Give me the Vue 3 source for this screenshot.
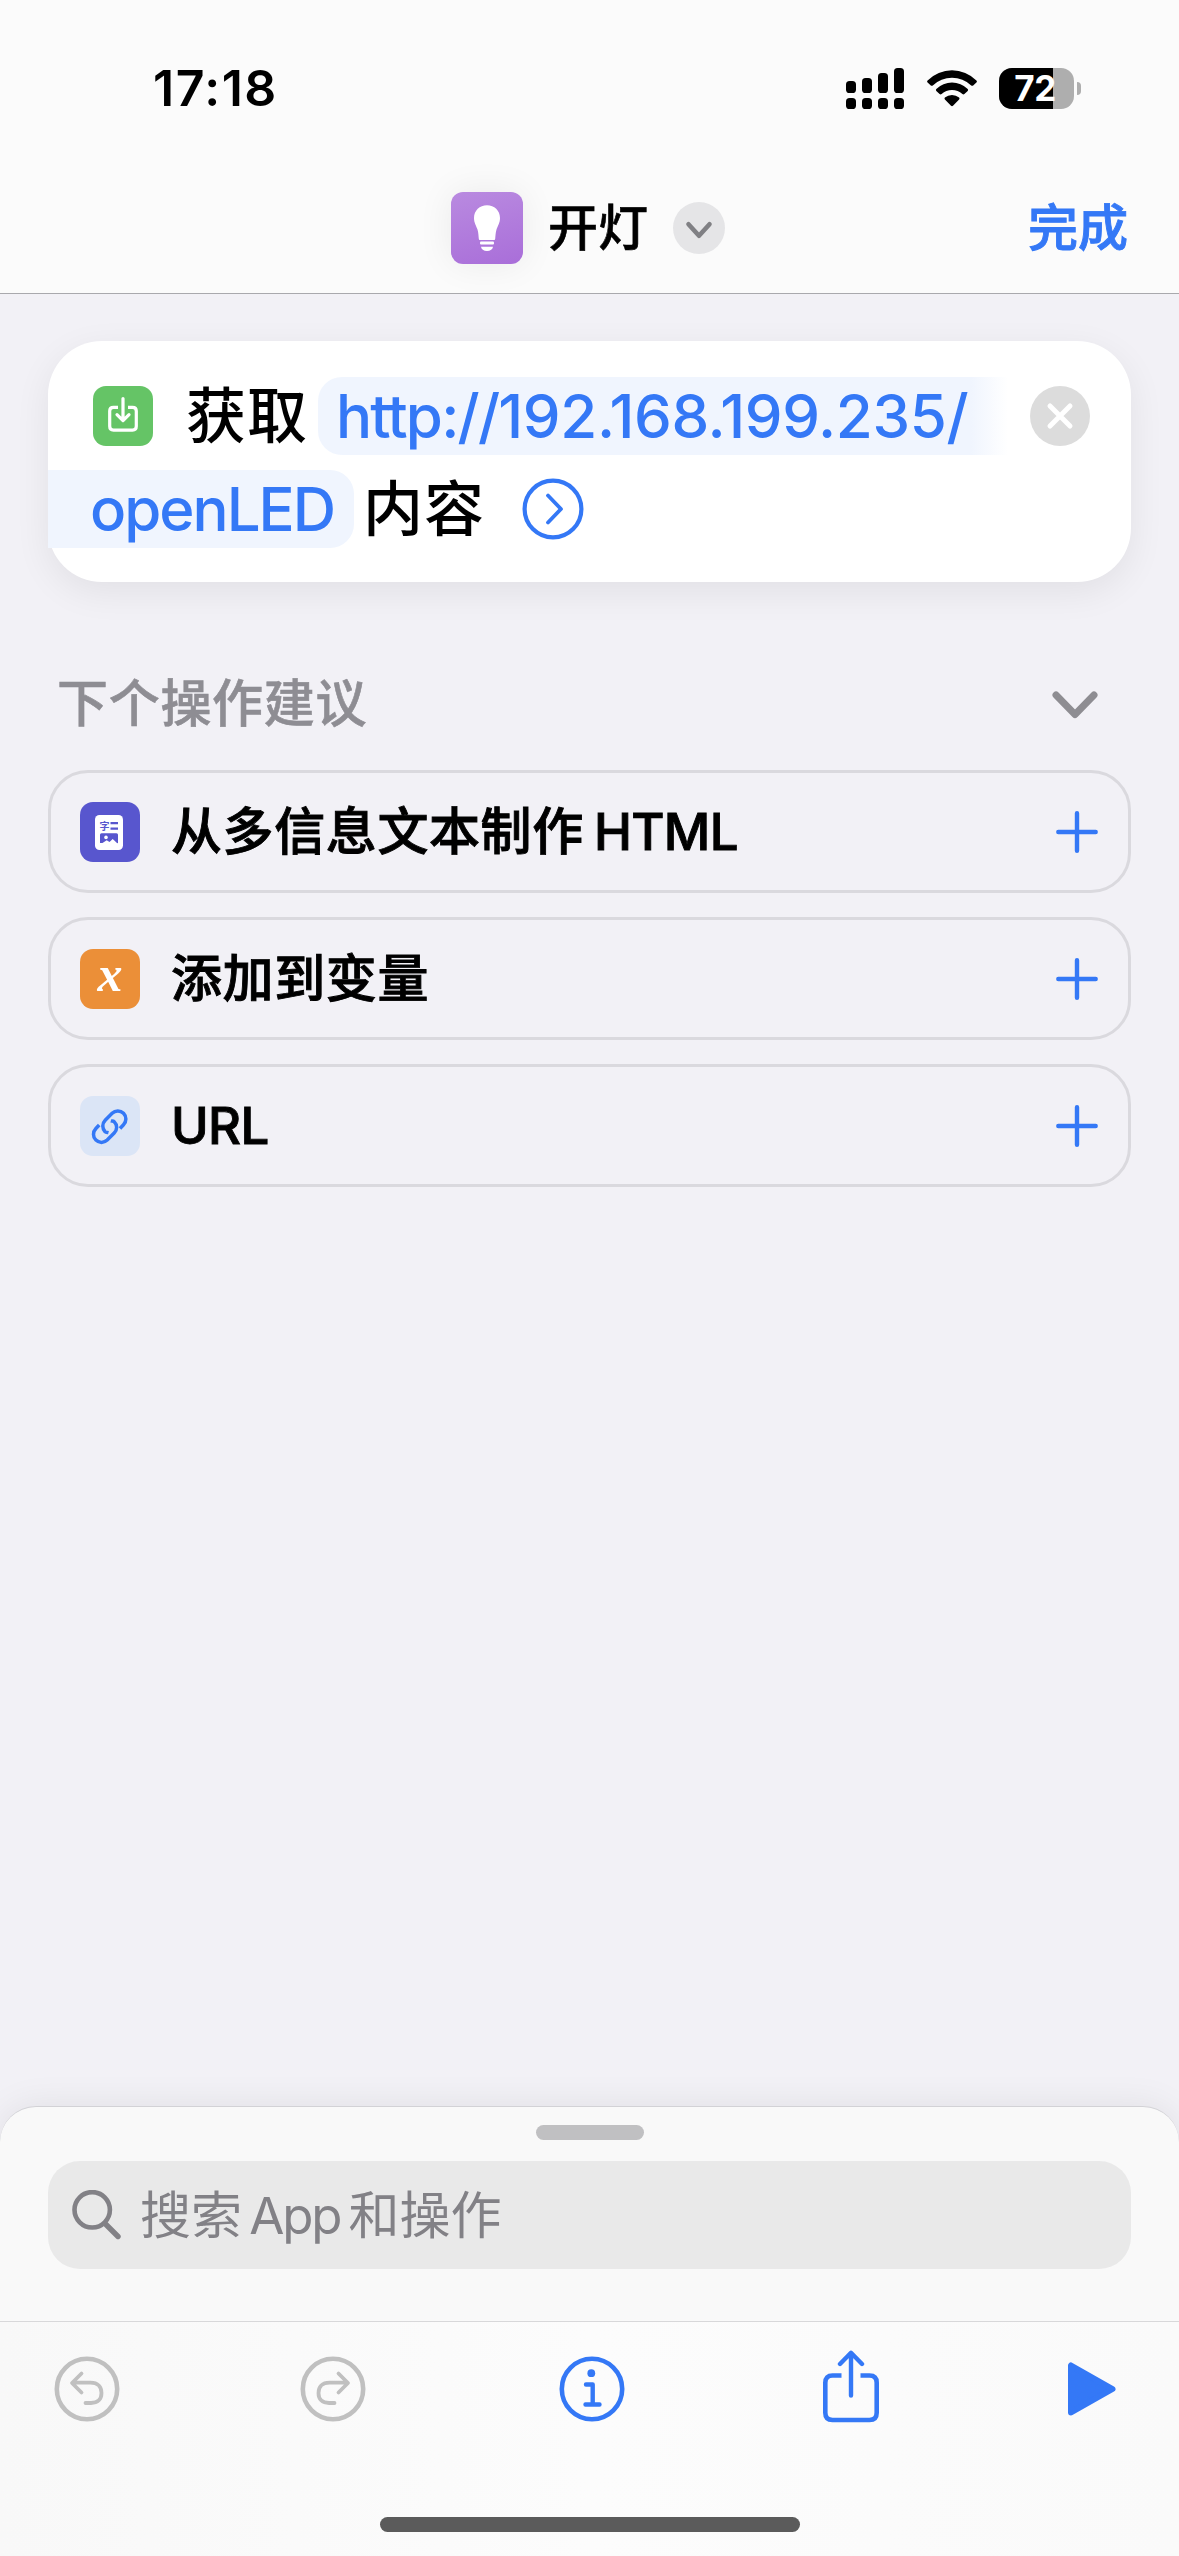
<template>
  <div class="shortcut-editor">
    <header class="top">
      <div class="status-bar">
        <span class="time">17:18</span>
        <div class="status-icons">
          <svg class="signal" width="58" height="41" viewBox="0 0 58 41">
            <rect
              v-for="(bar, i) in signalBars"
              :key="'bar' + i"
              :x="i * 16"
              :y="bar.y"
              width="10"
              :height="bar.h"
              rx="3.6"
            />
            <rect v-for="i in 4" :key="'dot' + i" :x="(i - 1) * 16" y="30" width="10" height="11" rx="3.6" />
          </svg>
          <svg class="wifi" width="50" height="38" viewBox="0 0 50 38">
            <path d="M0.6 11.4A34.5 34.5 0 0 1 49.4 11.4Q50.4 12.4 49.4 13.4L46.2 16.4Q45.2 17.2 44.2 16.4A28 28 0 0 0 5.8 16.4Q4.8 17.2 3.8 16.4L0.6 13.4Q-0.4 12.4 0.6 11.4Z" />
            <path d="M9.3 20A22.5 22.5 0 0 1 40.7 20Q41.6 21 40.7 22L37.4 25Q36.4 25.8 35.4 25A15.4 15.4 0 0 0 14.6 25Q13.6 25.8 12.6 25L9.3 22Q8.4 21 9.3 20Z" />
            <path d="M17.9 28.6A10.8 10.8 0 0 1 32.1 28.6Q33 29.6 32.1 30.5L26 36.8Q25 37.7 24 36.8L17.9 30.5Q17 29.6 17.9 28.6Z" />
          </svg>
          <div class="battery">
            <div class="battery-body">
              <div class="battery-level" :style="{ width: battery + '%' }"></div>
              <span class="battery-text">{{ battery }}</span>
            </div>
            <div class="battery-nub"></div>
          </div>
        </div>
      </div>

      <div class="nav">
        <div class="nav-title">
          <div class="app-icon">
            <svg width="72" height="72" viewBox="0 0 72 72" fill="#fff">
              <path d="M36 13.3c7.3 0 13 5.4 13 12.6 0 5-2.3 7.8-3.5 11.7-1 3.2-1 7-1.3 9.2-.1.9-.5 1.2-1.2 1.2H29c-.7 0-1.1-.3-1.2-1.2-.3-2.2-.3-6-1.3-9.2C25.3 33.7 23 30.9 23 25.9c0-7.2 5.7-12.6 13-12.6z" />
              <rect x="29" y="49.4" width="14" height="3.2" rx="1" />
              <path d="M30 54.8h12c-.3 2.6-2.6 4.2-6 4.2s-5.7-1.6-6-4.2z" />
            </svg>
          </div>
          <h1>开灯</h1>
          <button class="btn-more">
            <svg width="52" height="52" viewBox="0 0 52 52">
              <path d="M15.5 22.3L26 33.8L36.5 22.3" fill="none" stroke="#808084" stroke-width="4.6" stroke-linecap="round" stroke-linejoin="round" />
            </svg>
          </button>
        </div>
        <button class="btn-done">完成</button>
      </div>
    </header>

    <main class="content">
      <section class="action-card">
        <div class="line line-first">
          <div class="icon icon-green">
            <svg width="60" height="60" viewBox="0 0 60 60" fill="none" stroke="#fff" stroke-width="3.2" stroke-linecap="round" stroke-linejoin="round">
              <path d="M25 21.3H20.5Q16.7 21.3 16.7 25.1V40.3Q16.7 44.1 20.5 44.1H39.5Q43.3 44.1 43.3 40.3V25.1Q43.3 21.3 39.5 21.3H35" stroke-linecap="butt" />
              <path d="M30 12.5V34M24 28.6L30 34.6L36 28.6" />
            </svg>
          </div>
          <span class="word word-get">获取</span>
          <span class="token token-start"><span class="scheme">http://</span>192.168.199.235/</span>
          <button class="btn-remove">
            <svg width="60" height="60" viewBox="0 0 60 60">
              <path d="M20 20L40 40M40 20L20 40" stroke="#fff" stroke-width="5" stroke-linecap="round" />
            </svg>
          </button>
        </div>
        <div class="line">
          <span class="token token-end">openLED</span>
          <span class="word word-content">内容</span>
          <svg class="expand" width="62" height="62" viewBox="0 0 62 62" fill="none" stroke="#3478f6" stroke-linecap="round" stroke-linejoin="round">
            <circle cx="31" cy="31" r="28.4" stroke-width="4.2" />
            <path d="M26 17.5L39 31L26 44.5" stroke-width="3.8" />
          </svg>
        </div>
      </section>

      <section class="suggestions">
        <div class="section-header">
          <h2>下个操作建议</h2>
          <svg width="46" height="28" viewBox="0 0 46 28">
            <path d="M4 4L23 23.5L42 4" fill="none" stroke="#8e8d92" stroke-width="7" stroke-linecap="round" stroke-linejoin="round" />
          </svg>
        </div>

        <div v-for="item in suggestions" :key="item.id" class="suggestion">
          <div class="icon" :class="'icon-' + item.id">
            <svg v-if="item.id === 'html'" width="60" height="60" viewBox="0 0 60 60">
              <rect x="15" y="13" width="28" height="35" rx="4.5" fill="#fff" />
              <text class="glyph-zi" x="19.6" y="28">字</text>
              <path d="M30.5 21.2h7.5M30.5 26.7h7.5" stroke="#5856ce" stroke-width="2.2" />
              <path d="M21.5 31.2h15q1.500 0 1.500 1.500v8.600l-1-.300-4.300-4-3.200 3-2.800-1.700L22.500 41H20v-8.300q0-1.500 1.500-1.500z" fill="#5856ce" />
              <circle cx="26" cy="35.4" r="1.8" fill="#fff" />
            </svg>
            <span v-else-if="item.id === 'variable'" class="glyph-x">x</span>
            <svg v-else width="60" height="60" viewBox="0 0 60 60" fill="none" stroke="#3478f6" stroke-width="3.5">
              <path d="M19.2 29L15.9 32.5C12.7 35.8 12.7 41 15.9 44.1C19 47.2 24 47.2 27.2 44.1L34.2 37C37.5 33.7 37.4 28.8 34.2 25.7C33.3 24.9 32 25.2 30.8 24.9" />
              <path d="M40 32.5L43.5 28.7C46.7 25.4 46.6 20.5 43.5 17.3C40.4 14.2 35.3 14.2 32.1 17.3L25.2 24.3C22 27.6 22 32.5 25.1 35.7C26 36.5 27.3 36.3 28.5 36.6" />
            </svg>
          </div>
          <span class="suggestion-title">{{ item.title }} <span class="suggestion-latin">{{ item.latin }}</span></span>
          <svg width="42" height="42" viewBox="0 0 42 42">
            <path d="M21 2.3V39.7M2.3 21H39.7" stroke="#3478f6" stroke-width="4.4" stroke-linecap="round" />
          </svg>
        </div>
      </section>
    </main>

    <section class="sheet">
      <div class="grabber"></div>
      <div class="search">
        <svg width="50" height="50" viewBox="0 0 50 50" fill="none" stroke="#828186" stroke-linecap="round">
          <circle cx="20.2" cy="19.8" r="17.7" stroke-width="4.6" />
          <path d="M33 33.5L46 46.5" stroke-width="5.4" />
        </svg>
        <span class="placeholder">搜索 <span class="latin">App</span>和操作</span>
      </div>
    </section>

    <footer class="toolbar">
      <div class="tools">
        <svg class="tool disabled" width="66" height="66" viewBox="0 0 66 66">
          <circle cx="33" cy="33" r="30.2" stroke-width="4.6" />
          <path d="M27.5 17.5L18 27L27.5 36.5M19 26.7H36.5C44 26.7 47.5 31 47.5 37C47.5 43 44 47 37 47H31.5" stroke-width="3.8" />
        </svg>
        <svg class="tool tool-redo disabled" width="66" height="66" viewBox="0 0 66 66">
          <circle cx="33" cy="33" r="30.2" stroke-width="4.6" />
          <path d="M38.5 17.5L48 27L38.5 36.5M47 26.7H29.5C22 26.7 18.5 31 18.5 37C18.5 43 22 47 29 47H34.5" stroke-width="3.8" />
        </svg>
        <svg class="tool tool-info" width="66" height="66" viewBox="0 0 66 66">
          <circle cx="33" cy="33" r="30.2" stroke-width="4.6" />
          <path d="M27 28.5H33.7V48.5M26.5 48.5H40.5" stroke-width="4.4" />
          <circle cx="32.3" cy="17.2" r="3.9" fill="#3478f6" stroke="none" />
        </svg>
        <svg class="tool tool-share" width="58" height="74" viewBox="0 0 58 74">
          <path d="M19.5 25.5H10.5Q3.3 25.5 3.3 32.7V62.8Q3.3 70 10.5 70H47.5Q54.7 70 54.7 62.8V32.7Q54.7 25.5 47.5 25.5H38.5" stroke-width="4.6" stroke-linecap="butt" />
          <path d="M29 3.5V45.5M18 14L29 2.8L40 14" stroke-width="4.4" />
        </svg>
        <svg class="tool tool-play" width="50" height="56" viewBox="0 0 50 56">
          <path d="M4 4.5V51.5L45.5 28Z" fill="#3478f6" stroke-width="6" />
        </svg>
      </div>
      <div class="home-indicator"></div>
    </footer>
  </div>
</template>

<script setup>
import { ref } from 'vue'

const battery = ref(72)

const signalBars = [
  { y: 13, h: 12 },
  { y: 10, h: 15 },
  { y: 5, h: 20 },
  { y: 0, h: 25 }
]

const suggestions = ref([
  { id: 'html', title: '从多信息文本制作', latin: 'HTML' },
  { id: 'variable', title: '添加到变量', latin: '' },
  { id: 'url', title: '', latin: 'URL' }
])
</script>

<style>
body {
  margin: 0;
  background: #f2f1f6;
}
</style>

<style scoped>
.shortcut-editor {
  display: flex;
  flex-direction: column;
  width: 1179px;
  height: 2556px;
  overflow: hidden;
  background: #f2f1f6;
  color: #000;
  font-family: Inter, "Noto Sans CJK SC", sans-serif;
  font-size: 51px;
}

svg {
  display: block;
  flex: none;
}

button {
  border: none;
  padding: 0;
  margin: 0;
  background: none;
  font-family: inherit;
}

h1,
h2 {
  margin: 0;
}

.top {
  box-sizing: border-box;
  height: 294px;
  background: #fbfbfb;
  border-bottom: 1px solid #a9a9ad;
}

.status-bar {
  display: flex;
  justify-content: space-between;
  align-items: center;
  height: 176px;
  padding: 0 98px 0 153px;
}

.time {
  font-size: 50px;
  font-weight: 600;
  letter-spacing: 1.5px;
}

.status-icons {
  display: flex;
  align-items: center;
}

.wifi {
  margin: 0 22px 0 23px;
}

.battery {
  display: flex;
  align-items: center;
  gap: 3px;
}

.battery-body {
  position: relative;
  display: flex;
  align-items: center;
  justify-content: center;
  width: 75px;
  height: 41px;
  border-radius: 13px;
  background: #aeaeae;
  overflow: hidden;
}

.battery-level {
  position: absolute;
  left: 0;
  top: 0;
  bottom: 0;
  background: #000;
}

.battery-text {
  position: relative;
  color: #fff;
  margin-right: 3px;
  font-size: 35px;
  font-weight: 700;
  line-height: 41px;
  letter-spacing: -0.5px;
}

.battery-nub {
  width: 4px;
  height: 13px;
  border-radius: 0 6px 6px 0;
  background: #aeaeae;
}

.nav {
  display: flex;
  justify-content: space-between;
  align-items: center;
  height: 104px;
  padding: 0 51px 0 451px;
}

.nav-title {
  display: flex;
  align-items: center;
}

.app-icon {
  width: 72px;
  height: 72px;
  border-radius: 12px;
  background: linear-gradient(165deg, #b98ae0, #a96ed9);
  box-shadow: 0 0 36px rgba(0, 0, 0, 0.07);
}

h1 {
  margin: 0 25px 0 25px;
  font-size: 50px;
  font-weight: 500;
  line-height: 72px;
  -webkit-text-stroke: 0.6px currentColor;
}

.btn-more {
  width: 52px;
  height: 52px;
  border-radius: 50%;
  background: #e5e5e7;
}

.btn-done {
  color: #3478f6;
  font-size: 50px;
  font-weight: 500;
  line-height: 72px;
  -webkit-text-stroke: 0.9px currentColor;
}

.content {
  flex: 1;
  padding: 47px 48px 0;
}

.action-card {
  box-sizing: border-box;
  height: 241px;
  padding-top: 36px;
  border-radius: 54px;
  background: #fff;
  box-shadow: 0 10px 36px rgba(0, 0, 0, 0.07);
  font-size: 60px;
}

.line {
  display: flex;
  align-items: center;
  height: 78px;
  margin-bottom: 15px;
}

.line-first {
  padding: 0 41px 0 45px;
}

.icon {
  display: flex;
  align-items: center;
  justify-content: center;
  flex: none;
  width: 60px;
  height: 60px;
  border-radius: 13px;
}

.icon-green {
  background: #65c466;
}

.word {
  font-weight: 500;
  line-height: 78px;
  letter-spacing: 1px;
  white-space: nowrap;
}

.word-get {
  margin: 0 10px 0 33px;
}

.token {
  box-sizing: border-box;
  height: 78px;
  line-height: 78px;
  color: #3478f6;
  font-weight: 500;
  white-space: nowrap;
}

.token-start {
  width: 692px;
  padding-left: 18px;
  border-radius: 24px 0 0 24px;
  background: linear-gradient(to right, #f0f5fe 653px, #fff 690px);
  letter-spacing: -0.35px;
}

.scheme {
  letter-spacing: -1.8px;
}

.token-end {
  width: 306px;
  padding-left: 42px;
  border-radius: 0 24px 24px 0;
  background: #f0f5fe;
  letter-spacing: -2px;
}

.word-content {
  margin: 0 37px 0 9px;
}

.btn-remove {
  width: 60px;
  height: 60px;
  margin-left: auto;
  border-radius: 50%;
  background: #dcdcdc;
}

.section-header {
  display: flex;
  justify-content: space-between;
  align-items: center;
  height: 72px;
  margin: 87px 33px 29px 9px;
}

h2 {
  color: #8e8d93;
  padding-bottom: 2px;
  font-size: 51px;
  font-weight: 500;
  line-height: 72px;
  letter-spacing: 0.7px;
  -webkit-text-stroke: 0.6px currentColor;
}

.suggestion {
  box-sizing: border-box;
  display: flex;
  align-items: center;
  height: 123px;
  margin-bottom: 24px;
  padding: 0 30px 0 29px;
  border: 3px solid #dad9de;
  border-radius: 40px;
}

.suggestion-title {
  flex: 1;
  margin-left: 31px;
  font-size: 51px;
  font-weight: 500;
  line-height: 72px;
  letter-spacing: 0.6px;
  word-spacing: -4px;
  -webkit-text-stroke: 0.9px currentColor;
}

.suggestion-latin {
  letter-spacing: -0.7px;
}

.icon-html {
  background: #5856ce;
}

.icon-variable {
  background: #eb8f38;
}

.icon-url {
  background: #dbe5f6;
}

.glyph-zi {
  fill: #5856ce;
  font-family: "Noto Sans CJK SC", sans-serif;
  font-size: 10px;
  font-weight: 700;
}

.glyph-x {
  color: #fff;
  font-family: "Liberation Serif", serif;
  font-size: 50px;
  font-style: italic;
  font-weight: 700;
  line-height: 40px;
  padding-bottom: 9px;
}

.sheet {
  box-sizing: border-box;
  display: flex;
  flex-direction: column;
  align-items: center;
  height: 215px;
  padding: 18px 48px 0;
  border-top: 1px solid #d2d2d6;
  border-radius: 36px 36px 0 0;
  background: #f9f9f9;
  box-shadow: 0 0 36px rgba(0, 0, 0, 0.08);
}

.grabber {
  flex: none;
  width: 108px;
  height: 15px;
  margin-bottom: 21px;
  border-radius: 8px;
  background: #c0c0c2;
}

.search {
  box-sizing: border-box;
  display: flex;
  align-items: center;
  width: 100%;
  height: 108px;
  padding-left: 24px;
  border-radius: 32px;
  background: #e9e9e9;
  color: #828186;
}

.placeholder {
  margin-left: 18px;
  padding-top: 2px;
  font-size: 51px;
  line-height: 106px;
  white-space: nowrap;
  word-spacing: -7px;
}

.latin {
  margin-right: 8px;
  letter-spacing: -2.2px;
}

.toolbar {
  box-sizing: border-box;
  display: flex;
  flex-direction: column;
  align-items: center;
  height: 235px;
  border-top: 1px solid #d8d8da;
  background: linear-gradient(to right, #f8f8f8, #fcfcfc 50%, #fafafa);
}

.tools {
  box-sizing: border-box;
  display: flex;
  align-items: center;
  width: 100%;
  height: 134px;
  padding: 0 62px 0 54px;
}

.tool {
  fill: none;
  stroke: #3478f6;
  stroke-linecap: round;
  stroke-linejoin: round;
}

.disabled {
  stroke: #c0c0c0;
}

.tool-redo {
  margin-left: 180px;
}

.tool-info {
  margin-left: 193px;
}

.tool-share {
  margin-left: 197px;
  margin-bottom: 5px;
}

.tool-play {
  margin-left: auto;
}

.home-indicator {
  width: 420px;
  height: 15px;
  margin-top: 61px;
  border-radius: 8px;
  background: #5b5b5b;
}
</style>
